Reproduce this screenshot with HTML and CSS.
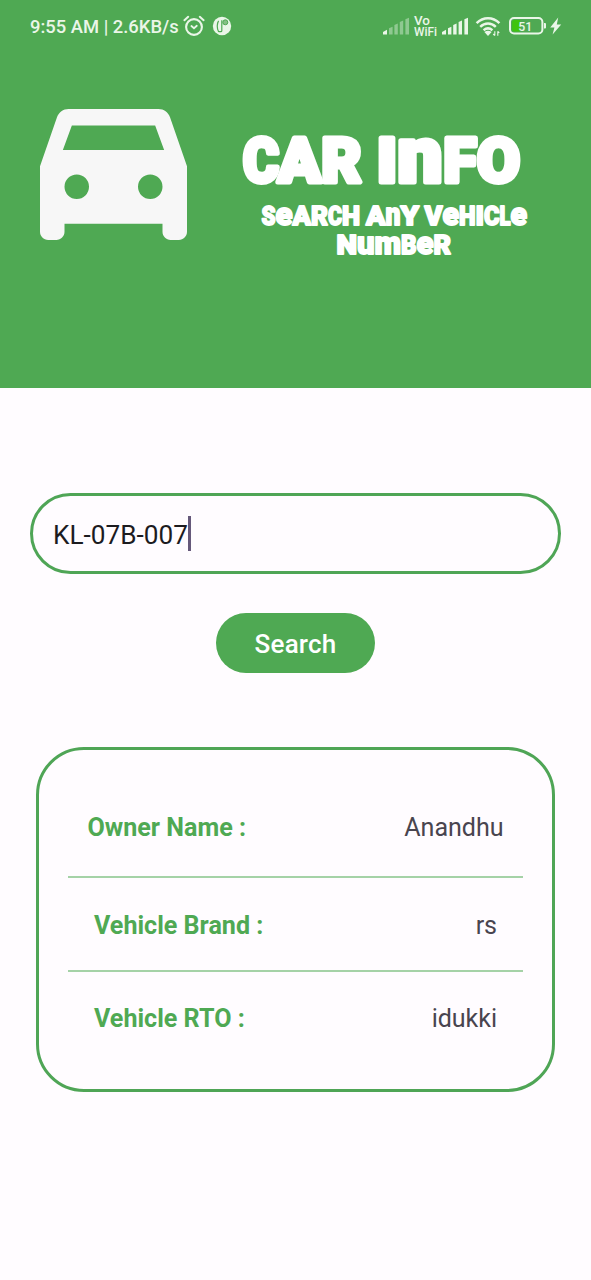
FILE: index.html
```html
<!DOCTYPE html>
<html lang="en">
<head>
<meta charset="utf-8">
<title>Car Info</title>
<link rel="stylesheet" href="styles.css">
</head>
<body>
<header class="hero">
  <div class="status">
    <span class="status-text">9:55 AM | 2.6KB/s</span>
    <svg class="alarm" width="22" height="22" viewBox="0 0 22 22" fill="none" stroke="#eaf6e8" stroke-linecap="round">
      <circle cx="11" cy="12" r="7.9" stroke-width="2.1"/>
      <path d="M1.4 5.2 5.2 1.8M20.6 5.2 16.8 1.8" stroke-width="2"/>
      <path d="M8.4 11 11 13.2 13.8 10.8" stroke-width="1.8"/>
    </svg>
    <svg class="badge" width="20" height="20" viewBox="0 0 20 20">
      <circle cx="10" cy="10" r="9.2" fill="#eaf6e8"/>
      <path d="M9.8 4.200v10.500q0 1-1 1H6.600M6.600 4.800C4.800 7.500 4.800 12.500 6.600 15.700" fill="none" stroke="#4fa953" stroke-width="1.2"/>
      <circle cx="13.300" cy="6.300" r="2.500" fill="#86bf86" stroke="#4fa953" stroke-width="1"/>
    </svg>
    <svg class="signals" width="180" height="26" viewBox="382 13 180 26">
      <g fill="#eaf6e8">
        <path d="M383 34.500v-2.500l4-2.300v4.800z"/>
        <g opacity=".42"><path d="M389 34.500v-6.200l3.600-1.500v7.700zM394.400 34.500V25l3.400-1.500v11zM399.800 34.500V22l3.400-1.500v14zM405.400 34.500V19.300l3.600-1.600v16.800z"/></g>
        <path d="M442 34.500v-2.500l4-2.300v4.800zM448 34.500v-6.200l3.400-1.500v7.700zM453.200 34.500V25l3.400-1.500v11zM458.600 34.500V22l3.400-1.500v14zM464.400 34.500V19.300l3.600-1.600v16.800z"/>
        <text class="vowifi" x="414" y="24.500" textLength="16" lengthAdjust="spacingAndGlyphs">Vo</text>
        <text class="vowifi" x="414" y="36" textLength="23" lengthAdjust="spacingAndGlyphs">WiFi</text>
        <path d="M488 36l-3.600-4c2.100-1.700 5.100-1.700 7.200 0z"/>
        <path d="M494.800 31.200v4.300M493.200 34l1.600 1.700M497.800 35.700v-4.500M499.300 32.900l-1.500-1.600" stroke="#eaf6e8" stroke-width="1.100"/>
        <path d="M558.200 17.600 550.200 27.400h4.200l-1.800 7.200 8.600-10h-4.400z"/>
        <path d="M544 23h1q1 0 1 1v3.600q0 1-1 1h-1z"/>
      </g>
      <g fill="none" stroke="#eaf6e8" stroke-width="2.500">
        <path d="M476.600 23.200c6.700-6.600 16.100-6.600 22.800 0M480.200 26.800c4.700-4.300 10.900-4.300 15.600 0M483.600 30.200c2.700-2.200 6.100-2.200 8.800 0"/>
        <rect x="510" y="18" width="32.400" height="15.400" rx="4" stroke-width="2"/>
      </g>
      <path d="M512.200 22a2 2 0 0 1 2-2h6v11.600h-6a2 2 0 0 1-2-2z" fill="#3fc40e"/>
      <text class="charge" x="518.200" y="30.600" textLength="14" lengthAdjust="spacingAndGlyphs">51</text>
    </svg>
  </div>
  <div class="brand">
    <svg class="car" width="147" height="131" viewBox="3 4 18 16" preserveAspectRatio="none">
      <path fill="#f7f7f7" fill-rule="evenodd" d="M18.920 5.010C18.720 4.420 18.160 4 17.500 4h-11c-.66 0-1.210.42-1.420 1.010L3 11v8c0 .55.45 1 1 1h1c.55 0 1-.45 1-1v-1h12v1c0 .55.45 1 1 1h1c.55 0 1-.45 1-1v-8zM6.900 6h10.200l1.100 3H5.800zM7.500 12a1.500 1.500 0 1 1 0 3 1.500 1.500 0 0 1 0-3zM16.500 12a1.500 1.500 0 1 1 0 3 1.500 1.500 0 0 1 0-3z"/>
    </svg>
    <svg class="wordmark" width="300" height="180" viewBox="236 95 300 180">
      <text class="title" y="181.500"><tspan x="243" textLength="36" lengthAdjust="spacingAndGlyphs">C</tspan><tspan x="278" textLength="43" lengthAdjust="spacingAndGlyphs">A</tspan><tspan x="321.500" textLength="40" lengthAdjust="spacingAndGlyphs">R</tspan> <tspan x="377" textLength="20" lengthAdjust="spacingAndGlyphs">I</tspan><tspan class="title-low" x="397.500" textLength="45" lengthAdjust="spacingAndGlyphs">n</tspan><tspan x="443.500" textLength="33" lengthAdjust="spacingAndGlyphs">F</tspan><tspan x="477" textLength="43" lengthAdjust="spacingAndGlyphs">O</tspan></text>
      <text class="tag" y="224.500"><tspan x="261.500" textLength="14" lengthAdjust="spacingAndGlyphs">S</tspan><tspan class="low" x="275.500" textLength="17" lengthAdjust="spacingAndGlyphs">e</tspan><tspan x="292.500" textLength="18.500" lengthAdjust="spacingAndGlyphs">A</tspan><tspan x="311" textLength="17" lengthAdjust="spacingAndGlyphs">R</tspan><tspan x="328" textLength="14" lengthAdjust="spacingAndGlyphs">C</tspan><tspan x="342" textLength="18" lengthAdjust="spacingAndGlyphs">H</tspan> <tspan x="366" textLength="19.500" lengthAdjust="spacingAndGlyphs">A</tspan><tspan class="low" x="385.500" textLength="15" lengthAdjust="spacingAndGlyphs">n</tspan><tspan x="400.500" textLength="18.500" lengthAdjust="spacingAndGlyphs">Y</tspan> <tspan x="424.500" textLength="18" lengthAdjust="spacingAndGlyphs">V</tspan><tspan class="low" x="442.500" textLength="16.500" lengthAdjust="spacingAndGlyphs">e</tspan><tspan x="459" textLength="16.500" lengthAdjust="spacingAndGlyphs">H</tspan><tspan x="475.500" textLength="8.500" lengthAdjust="spacingAndGlyphs">I</tspan><tspan x="484" textLength="15.500" lengthAdjust="spacingAndGlyphs">C</tspan><tspan x="499.500" textLength="11" lengthAdjust="spacingAndGlyphs">L</tspan><tspan class="low" x="510.500" textLength="16.500" lengthAdjust="spacingAndGlyphs">e</tspan></text>
      <text class="tag" y="253.500"><tspan x="336.500" textLength="20.500" lengthAdjust="spacingAndGlyphs">N</tspan><tspan class="low" x="357" textLength="17.500" lengthAdjust="spacingAndGlyphs">u</tspan><tspan class="low" x="374.500" textLength="26.500" lengthAdjust="spacingAndGlyphs">m</tspan><tspan x="401" textLength="15.500" lengthAdjust="spacingAndGlyphs">B</tspan><tspan class="low" x="416.500" textLength="17" lengthAdjust="spacingAndGlyphs">e</tspan><tspan x="433.500" textLength="17.500" lengthAdjust="spacingAndGlyphs">R</tspan></text>
    </svg>
  </div>
</header>
<main class="content">
  <div class="field"><span class="value">KL-07B-007</span><span class="caret"></span></div>
  <button class="search">Search</button>
  <section class="card">
    <div class="row first"><span class="label">Owner Name :</span><span class="data">Anandhu</span></div>
    <div class="row"><span class="label">Vehicle Brand :</span><span class="data">rs</span></div>
    <div class="row last"><span class="label">Vehicle RTO :</span><span class="data">idukki</span></div>
  </section>
</main>
</body>
</html>
```
FILE: styles.css
```css
* { box-sizing: border-box; }
body {
  margin: 0;
  min-height: 1280px;
  background: #fffcff;
  font-family: Roboto, "Liberation Sans", sans-serif;
}
.hero { height: 388px; background: #4fa953; }
.status {
  display: flex;
  align-items: center;
  height: 52px;
  padding: 0 29px 0 30px;
  color: #eaf6e8;
}
.status-text {
  width: 153px;
  padding-top: 1px;
  font-size: 18.4px;
  font-weight: 500;
  white-space: nowrap;
}
.badge { margin-left: 7px; }
.signals { margin-left: auto; }
.vowifi { font-size: 12.5px; font-weight: 500; }
.charge { fill: #eaf6e8; font-size: 13px; font-weight: 500; }
.brand { display: flex; align-items: flex-start; padding: 43px 0 0 40px; }
.car { margin-top: 14px; }
.wordmark { margin-left: 49px; }
.title, .tag { fill: #fff; stroke: #fff; font-weight: 900; stroke-linejoin: round; }
.title { font-size: 61px; stroke-width: 5px; }
.title-low { font-size: 77px; }
.tag { font-size: 26px; stroke-width: 1.8px; }
.low { font-size: 32px; }
.content {
  display: flex;
  flex-direction: column;
  align-items: center;
  padding-top: 105px;
}
.field {
  display: flex;
  align-items: center;
  width: 531px;
  height: 81px;
  padding-left: 20px;
  border: 3px solid #4fa556;
  border-radius: 41px;
}
.value { padding-top: 2px; font-size: 26.2px; color: #1c1b1f; }
.caret { width: 3px; height: 35px; background: #65587a; }
.search {
  width: 159px;
  height: 60px;
  margin-top: 39px;
  padding: 2px 0 0;
  border: 0;
  border-radius: 30px;
  background: #4fa953;
  color: #fff;
  font: 500 26px Roboto, "Liberation Sans", sans-serif;
  letter-spacing: .2px;
}
.card {
  width: 519px;
  height: 345px;
  margin-top: 74px;
  padding: 29px 29px 0;
  border: 3px solid #4fa556;
  border-radius: 48px;
}
.row {
  display: flex;
  align-items: center;
  justify-content: space-between;
  height: 94px;
  padding: 3px 26px 0;
  border-bottom: 2px solid #a5d2a7;
  font-size: 25.1px;
}
.first { height: 99px; padding: 0 19.5px; }
.last { height: 93px; padding-top: 0; border-bottom: 0; }
.label { font-weight: 700; color: #4fa953; }
.data { color: #49454f; letter-spacing: -.05px; }
```
